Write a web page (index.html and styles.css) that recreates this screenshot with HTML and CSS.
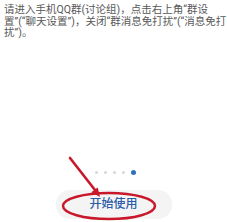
FILE: index.html
```html
<!DOCTYPE html>
<html lang="zh-CN">
<head>
<meta charset="utf-8">
<link rel="stylesheet" href="styles.css">
</head>
<body>
<div class="page">
  <p class="text">请进入手机QQ群(讨论组)，点击右上角“群设<br>置”(“聊天设置”)，关闭“群消息免打扰”(“消息免打<br>扰”)。</p>
  <div class="spacer"></div>
  <div class="dots">
    <span class="dot"></span><span class="dot"></span><span class="dot"></span><span class="dot"></span><span class="dot active"></span>
  </div>
  <div class="btn-row"><div class="btn">开始使用</div></div>
  <svg class="mark" width="227" height="222" viewBox="0 0 227 222">
    <ellipse cx="109" cy="206" rx="46" ry="13" fill="none" stroke="#c8182a" stroke-width="2.5"/>
    <line x1="70" y1="158" x2="95" y2="190" stroke="#c8182a" stroke-width="2.6" stroke-linecap="round"/>
    <polygon points="100,197 91.3,192.3 97.7,187.5" fill="#c8182a"/>
  </svg>
</div>
</body>
</html>
```
FILE: styles.css
```css
html, body {
  margin: 0;
  padding: 0;
  background: #ffffff;
}
.page {
  position: relative;
  width: 227px;
  height: 222px;
  display: flex;
  flex-direction: column;
  overflow: hidden;
  font-family: Roboto, "Noto Sans CJK SC", sans-serif;
}
.text {
  margin: 0;
  padding: 4px 0 0 4px;
  font-size: 10.5px;
  line-height: 11.5px;
  color: #585858;
  white-space: nowrap;
}
.spacer {
  flex: 1;
}
.dots {
  display: flex;
  justify-content: center;
  align-items: center;
  gap: 6px;
  height: 6px;
  margin-bottom: 15px;
  padding-left: 3px;
}
.dot {
  width: 3px;
  height: 3px;
  border-radius: 50%;
  background: #d6d6d6;
}
.dot.active {
  width: 5px;
  height: 5px;
  background: #2f6fc2;
}
.btn-row {
  display: flex;
  justify-content: center;
  margin-bottom: 3px;
}
.btn {
  width: 116px;
  height: 29px;
  border-radius: 14px;
  background: #f4f4f5;
  color: #2b5ca8;
  font-size: 12px;
  font-weight: 500;
  line-height: 29px;
  text-align: center;
}
.mark {
  position: absolute;
  left: 0;
  top: 0;
}
```
